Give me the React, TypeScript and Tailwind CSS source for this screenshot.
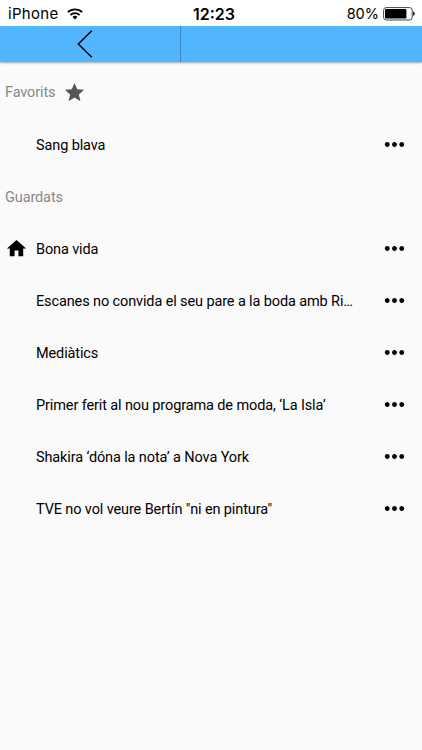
import { MdHome, MdMoreHoriz, MdStar } from 'react-icons/md';

type Article = {
  title: string;
  home?: boolean;
};

const favorites: Article[] = [{ title: 'Sang blava' }];

const saved: Article[] = [
  { title: 'Bona vida', home: true },
  { title: 'Escanes no convida el seu pare a la boda amb Ri…' },
  { title: 'Mediàtics' },
  { title: 'Primer ferit al nou programa de moda, ‘La Isla’' },
  { title: 'Shakira ‘dóna la nota’ a Nova York' },
  { title: 'TVE no vol veure Bertín "ni en pintura"' },
];

function StatusBar() {
  return (
    <div className="grid h-[26px] grid-cols-[185px_auto_1fr] items-center bg-white pt-[2px] pr-[7px] pl-[8px] font-[Inter,sans-serif] text-black">
      <div className="flex items-center">
        <span className="w-[51px] text-[15px] leading-6 tracking-[0.3px] whitespace-nowrap">
          iPhone
        </span>
        <svg
          className="ml-[8px]"
          width="16"
          height="12"
          viewBox="0 0 16 12"
          fill="none"
          stroke="black"
          strokeWidth="1.8"
        >
          <path d="M0.8 4.2a10.4 10.4 0 0 1 14.4 0" />
          <path d="M3.4 7a6.5 6.5 0 0 1 9.2 0" />
          <path d="M8 11.4 5.5 8.9a3.7 3.7 0 0 1 5 0z" fill="black" stroke="none" />
        </svg>
      </div>
      <span className="text-[16px] leading-6 font-semibold">12:23</span>
      <div className="flex items-center justify-end">
        <span className="text-[14.5px] leading-6">80%</span>
        <svg className="ml-[4px]" width="32" height="14" viewBox="0 0 32 14">
          <rect
            x="0.6"
            y="0.6"
            width="28.6"
            height="12.4"
            rx="2.6"
            fill="white"
            stroke="#444"
            strokeWidth="1"
          />
          <rect x="2" y="2" width="21.4" height="9.6" rx="1" />
          <path d="M30.2 4.6c2 .6 2 3.8 0 4.4z" />
        </svg>
      </div>
    </div>
  );
}

function Header() {
  return (
    <header className="flex h-9 bg-[#51b5ff] shadow-[0_1px_2px_rgba(0,0,0,0.35)]">
      <button
        className="flex w-[180px] items-center pl-[77px]"
        aria-label="Enrere"
      >
        <svg
          width="16"
          height="28"
          viewBox="0 0 16 28"
          fill="none"
          stroke="black"
          strokeWidth="1.5"
        >
          <path d="M14.8 0.8 1.3 14 14.8 27.2" />
        </svg>
      </button>
      <div className="w-px bg-[#3c87bf]" />
    </header>
  );
}

function ArticleRow({ title, home }: Article) {
  return (
    <li className="flex h-[52px] items-center pr-[13px] pl-[5px]">
      <div className="w-[31px]">{home && <MdHome size={23} />}</div>
      <span className="pt-1 text-[14.5px] leading-6 tracking-[-0.12px] whitespace-nowrap">
        {title}
      </span>
      <button className="ml-auto" aria-label="Opcions">
        <MdMoreHoriz size={29} />
      </button>
    </li>
  );
}

function App() {
  return (
    <div className="min-h-screen bg-[#fafafa] font-[Roboto,sans-serif] text-black">
      <StatusBar />
      <Header />
      <main className="pt-1">
        <h2 className="flex h-[52px] items-center pl-[5px] text-[14.5px] tracking-[-0.12px] text-[#888]">
          <span className="pt-[2px]">Favorits</span>
          <MdStar className="ml-2 text-[#555]" size={23} />
        </h2>
        <ul>
          {favorites.map((item) => (
            <ArticleRow key={item.title} {...item} />
          ))}
        </ul>
        <h2 className="flex h-[52px] items-center pt-[3px] pl-[5px] text-[14.5px] tracking-[-0.12px] text-[#888]">
          Guardats
        </h2>
        <ul>
          {saved.map((item) => (
            <ArticleRow key={item.title} {...item} />
          ))}
        </ul>
      </main>
    </div>
  );
}

export default App;
